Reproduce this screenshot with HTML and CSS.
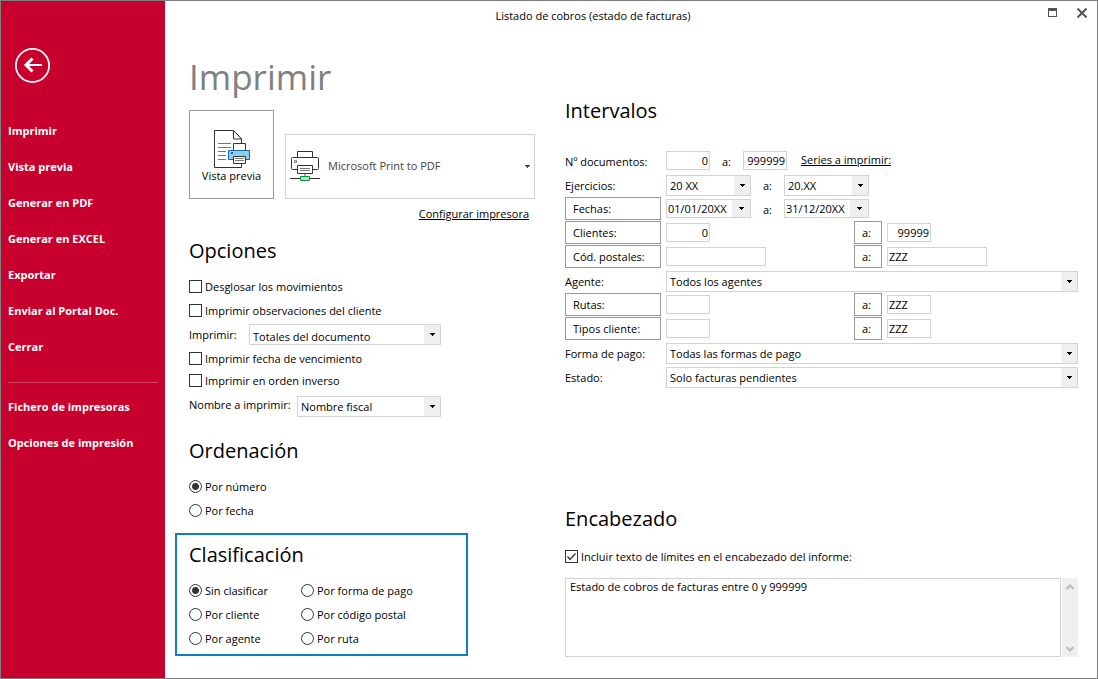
FILE: index.html
```html
<!DOCTYPE html>
<html lang="es">
<head>
<meta charset="utf-8">
<meta name="viewport" content="width=device-width, initial-scale=1">
<title>Listado de cobros (estado de facturas)</title>
<link rel="stylesheet" href="styles.css">
</head>
<body>
<div class="window">
  <aside class="sidebar">
    <button class="back" type="button" aria-label="Volver">
      <svg width="35" height="35" viewBox="0 0 35 35" fill="none" stroke="#fff"><circle cx="17.500" cy="17.500" r="16.600" stroke-width="1.800"/><path d="M10 17h17" stroke-width="2"/><path d="M17.500 10.500l-6.500 6.500 6.500 6.500" stroke-width="3"/></svg>
    </button>
    <nav class="nav">
      <a href="#">Imprimir</a>
      <a href="#">Vista previa</a>
      <a href="#">Generar en PDF</a>
      <a href="#">Generar en EXCEL</a>
      <a href="#">Exportar</a>
      <a href="#">Enviar al Portal Doc.</a>
      <a href="#">Cerrar</a>
      <hr class="nav-line">
      <a href="#">Fichero de impresoras</a>
      <a href="#">Opciones de impresión</a>
    </nav>
  </aside>
  <div class="main">
    <header class="titlebar">
      <div class="title">Listado de cobros (estado de facturas)</div>
      <div class="controls">
        <button type="button" aria-label="Maximizar"><svg width="9" height="9" viewBox="0 0 9 9"><path fill="#555" fill-rule="evenodd" d="M0 0h9v9H0zM1 3v5h7V3z"/></svg></button>
        <button type="button" aria-label="Cerrar ventana"><svg width="10" height="10" viewBox="0 0 10 10" stroke="#555" stroke-width="2"><path d="M.5.5l9 9M9.500.5l-9 9"/></svg></button>
      </div>
    </header>
    <main class="content">
      <div class="left">
        <h1>Imprimir</h1>
        <div class="print-row">
          <button class="preview" type="button">
            <svg width="38" height="38" viewBox="0 0 38 38" fill="#fff" stroke="#333">
              <path d="M1.500.5h19l8 8.500v28.500h-27z"/><path d="M20.500.5v8.500h8z"/>
              <path d="M5 13.500h13M5 17.500h13M5 21.500h8M5 25.500h8M5 29.500h8" stroke="#777"/>
              <path d="M20.500 13.500h12v8h-12z"/>
              <path d="M15.500 20.500h21v9h-21z" fill="#92cbee" stroke="#1668b0"/>
              <path d="M18 22h2v2h-2z" fill="#1668b0" stroke="none"/>
              <path d="M20.500 26.500h12v7h-12z"/><path d="M22 28.500h9M22 30.500h9" stroke="#777"/>
            </svg>
            <span>Vista previa</span>
          </button>
          <div class="printer">
            <svg width="30" height="31" viewBox="0 0 30 31" fill="#fff" stroke="#333">
              <path d="M7.500 7V.5h15V7"/><rect x="1.500" y="6.500" width="27" height="12" rx="1"/>
              <path d="M4.500 9.500h2v2h-2z" stroke="#777"/>
              <path d="M7.500 14.500h15v8h-15z"/><path d="M10 17.500h10M10 19.500h10" stroke="#777"/>
              <path d="M15 23v3" stroke="#aaa" stroke-width="2"/><path d="M0 27.500h30"/>
              <path d="M10.500 25.500h9v4h-9z" fill="#b5e3ba" stroke="#089447"/>
            </svg>
            <select aria-label="Impresora"><option>Microsoft Print to PDF</option></select>
          </div>
        </div>
        <a class="link configure" href="#">Configurar impresora</a>

        <section class="options">
          <h2>Opciones</h2>
          <label class="check"><input type="checkbox">Desglosar los movimientos</label>
          <label class="check"><input type="checkbox">Imprimir observaciones del cliente</label>
          <div class="field"><label for="what">Imprimir:</label><select id="what" class="combo combo-wide"><option>Totales del documento</option></select></div>
          <label class="check"><input type="checkbox">Imprimir fecha de vencimiento</label>
          <label class="check check-tight"><input type="checkbox">Imprimir en orden inverso</label>
          <div class="field field-last"><label for="name">Nombre a imprimir:</label><select id="name" class="combo combo-medium"><option>Nombre fiscal</option></select></div>
        </section>

        <section class="ordering">
          <h2>Ordenación</h2>
          <label class="check"><input type="radio" name="order" checked>Por número</label>
          <label class="check"><input type="radio" name="order">Por fecha</label>
        </section>

        <section class="classify">
          <h2>Clasificación</h2>
          <div class="radio-grid">
            <label class="check"><input type="radio" name="class" checked>Sin clasificar</label>
            <label class="check"><input type="radio" name="class">Por forma de pago</label>
            <label class="check"><input type="radio" name="class">Por cliente</label>
            <label class="check"><input type="radio" name="class">Por código postal</label>
            <label class="check"><input type="radio" name="class">Por agente</label>
            <label class="check"><input type="radio" name="class">Por ruta</label>
          </div>
        </section>
      </div>

      <div class="right">
        <section class="ranges">
          <h2>Intervalos</h2>
          <div class="row">
            <label for="doc1">Nº documentos:</label>
            <div class="pair">
              <input id="doc1" class="box short num" value="0">
              <label class="to" for="doc2">a:</label>
              <input id="doc2" class="box short num" value="999999">
              <a class="link series" href="#">Series a imprimir:</a>
            </div>
          </div>
          <div class="row">
            <label for="year1">Ejercicios:</label>
            <div class="pair">
              <select id="year1" class="combo period"><option>20 XX</option></select>
              <label class="to" for="year2">a:</label>
              <select id="year2" class="combo period"><option>20.XX</option></select>
            </div>
          </div>
          <div class="row">
            <button class="btn" type="button">Fechas:</button>
            <div class="pair">
              <select class="combo period date" aria-label="Fecha inicial"><option>01/01/20XX</option></select>
              <label class="to" for="date2">a:</label>
              <select id="date2" class="combo period date"><option>31/12/20XX</option></select>
            </div>
          </div>
          <div class="row limits">
            <button class="btn" type="button">Clientes:</button>
            <input class="box short num" aria-label="Cliente inicial" value="0">
            <button class="btn" type="button">a:</button>
            <input class="box short num" aria-label="Cliente final" value="99999">
          </div>
          <div class="row limits">
            <button class="btn" type="button">Cód. postales:</button>
            <input class="box long" aria-label="Código postal inicial">
            <button class="btn" type="button">a:</button>
            <input class="box long" aria-label="Código postal final" value="ZZZ">
          </div>
          <div class="row"><label for="agent">Agente:</label><select id="agent" class="combo"><option>Todos los agentes</option></select></div>
          <div class="row limits">
            <button class="btn" type="button">Rutas:</button>
            <input class="box short" aria-label="Ruta inicial">
            <button class="btn" type="button">a:</button>
            <input class="box short" aria-label="Ruta final" value="ZZZ">
          </div>
          <div class="row limits">
            <button class="btn" type="button">Tipos cliente:</button>
            <input class="box short" aria-label="Tipo de cliente inicial">
            <button class="btn" type="button">a:</button>
            <input class="box short" aria-label="Tipo de cliente final" value="ZZZ">
          </div>
          <div class="row"><label for="pay">Forma de pago:</label><select id="pay" class="combo"><option>Todas las formas de pago</option></select></div>
          <div class="row"><label for="state">Estado:</label><select id="state" class="combo"><option>Solo facturas pendientes</option></select></div>
        </section>

        <section class="heading">
          <h2>Encabezado</h2>
          <label class="check"><input type="checkbox" checked>Incluir texto de límites en el encabezado del informe:</label>
          <div class="memo">
            <textarea aria-label="Texto del encabezado">Estado de cobros de facturas entre 0 y 999999</textarea>
            <div class="scroll">
              <button type="button" aria-label="Subir"><svg width="8" height="6" viewBox="0 0 8 6" fill="none" stroke="#bbb" stroke-width="2"><path d="M.5 5L4 1.500 7.500 5"/></svg></button>
              <button type="button" aria-label="Bajar"><svg width="8" height="6" viewBox="0 0 8 6" fill="none" stroke="#bbb" stroke-width="2"><path d="M.5 1L4 4.500 7.500 1"/></svg></button>
            </div>
          </div>
        </section>
      </div>
    </main>
  </div>
</div>
</body>
</html>
```
FILE: styles.css
```css
* { box-sizing: border-box; }

body {
  margin: 0;
  background: #fff;
  color: #000;
  font: 11px/16px "Open Sans", "Noto Sans", sans-serif;
}

button, input, select, textarea {
  margin: 0;
  font: inherit;
  color: inherit;
  border-radius: 0;
}

button { padding: 0; border: 0; background: none; }
a { color: inherit; }
svg { display: block; }

.window {
  display: flex;
  min-height: 100vh;
  border: 1px solid #7f7f7f;
}

.sidebar {
  flex: 0 0 164px;
  padding: 47px 7px 0;
  background: #c8002d;
  color: #fff;
}

.back { display: block; margin: 0 0 30px 7px; }
.nav { display: flex; flex-direction: column; }

.nav a {
  font-weight: 700;
  line-height: 36px;
  text-decoration: none;
  white-space: nowrap;
}

.nav-line {
  width: 100%;
  height: 1px;
  margin: 17px 0 6px;
  border: 0;
  background: #d34061;
}

.main { flex: 1; min-width: 0; display: flex; flex-direction: column; }
.titlebar { display: flex; height: 30px; }
.title { flex: 1; line-height: 30px; text-align: center; }

.controls {
  flex: 0 0 76px;
  display: flex;
  justify-content: flex-end;
  align-items: flex-start;
  gap: 20px;
  padding: 7px 10px 0 0;
}

.content {
  flex: 1;
  display: grid;
  grid-template-columns: 346px minmax(0, 1fr);
  gap: 30px;
  padding: 0 19px 21px 24px;
}

h1, h2 { margin: 0; font-weight: 400; }
h1 { margin: 22px 0 9px; font-size: 35px; line-height: 48px; color: #808080; }
h2 { font-size: 20px; line-height: 32px; margin-bottom: 8px; }

.print-row { display: flex; align-items: flex-end; gap: 11px; }

.preview {
  flex: 0 0 85px;
  height: 89px;
  display: flex;
  flex-direction: column;
  align-items: center;
  padding-top: 19px;
  border: 1px solid #999;
}

.printer {
  flex: 1;
  height: 65px;
  display: flex;
  align-items: center;
  padding-left: 4px;
  border: 1px solid #d3d3d3;
}

.printer select {
  flex: 1;
  height: 63px;
  padding: 0 20px 2px 8px;
  border: 0;
  appearance: none;
  color: #444;
  background: url("data:image/svg+xml,%3Csvg xmlns='http://www.w3.org/2000/svg' width='5' height='3'%3E%3Cpath fill='%23444' d='M0 0h5v1H4v1H3v1H2V2H1V1H0z'/%3E%3C/svg%3E") no-repeat right 4px center;
}

.link { display: block; text-decoration: underline; }
.configure { width: fit-content; margin: 7px 6px 13px auto; }

.check { display: flex; align-items: flex-start; gap: 3px; height: 24px; line-height: 24px; white-space: nowrap; }
.check-tight { height: 20px; line-height: 20px; }

.check input {
  flex: none;
  width: 13px;
  height: 13px;
  margin-top: 5px;
  appearance: none;
  border: 1px solid #333;
  background: #fff;
}

.check-tight input { margin-top: 3px; }
.check input[type="radio"] { border-radius: 50%; }
.check input[type="radio"]:checked { background: radial-gradient(circle, #333 0 3px, #fff 4px); }
.check input[type="checkbox"]:checked {
  background: url("data:image/svg+xml,%3Csvg xmlns='http://www.w3.org/2000/svg' width='11' height='11'%3E%3Cpath fill='none' stroke='%23333' stroke-width='1.3' d='M1.500 5.500l2.500 3L9.500 2.500'/%3E%3C/svg%3E") center;
}

.field { display: flex; justify-content: space-between; height: 24px; width: 252px; line-height: 24px; }
.field-last { margin-top: 4px; line-height: 20px; }
.field .combo { margin-top: 1px; }

.combo {
  height: 21px;
  min-width: 0;
  padding: 0 18px 0 3px;
  border: 1px solid #d3d3d3;
  appearance: none;
  background:
    url("data:image/svg+xml,%3Csvg xmlns='http://www.w3.org/2000/svg' width='5' height='3'%3E%3Cpath d='M0 0h5v1H4v1H3v1H2V2H1V1H0z'/%3E%3C/svg%3E") no-repeat right 5px center,
    linear-gradient(#efefef, #efefef) no-repeat right / 16px 100%,
    #fff;
}

.combo-wide { width: 192px; }
.combo-medium { width: 144px; }

.ordering { margin: 16px 0 10px; }

.classify {
  width: 293px;
  margin-left: -14px;
  padding: 4px 12px 3px;
  border: 2px solid #0a7fc2;
}

.radio-grid { display: grid; grid-template-columns: 112px 1fr; }

.right { display: flex; flex-direction: column; justify-content: space-between; }
.ranges h2 { margin: 64px 0 22px; }
.heading h2 { margin-bottom: 10px; }

.row {
  display: grid;
  grid-template-columns: 96px minmax(0, 1fr);
  column-gap: 5px;
  align-items: start;
  height: 24px;
}

.limits { grid-template-columns: 96px 183px 28px minmax(0, 1fr); }
.row label { line-height: 26px; }
.pair { display: flex; align-items: flex-start; }
.to { padding: 0 12px; min-width: 33px; }
.row .combo, .row .box { margin-top: 2px; }

.box { height: 19px; padding: 0 1px 1px; border: 1px solid #d3d3d3; background: #fff; }
.short { width: 44px; }
.long { width: 100px; }
.num { text-align: right; }
.period { width: 85px; }

.date {
  height: 19px;
  padding-left: 1px;
  padding-right: 16px;
  background-position: right 6px center, right;
  background-size: auto, 18px 100%;
}

.series { margin-left: 14px; line-height: 22px; }

.btn { height: 23px; padding: 0 7px; border: 1px solid #999; text-align: left; }

.memo { display: flex; gap: 1px; height: 79px; margin-top: 9px; }

.memo textarea {
  flex: 1;
  padding: 0 4px;
  border: 1px solid #d3d3d3;
  resize: none;
  outline: 0;
  overflow: hidden;
}

.scroll {
  flex: 0 0 16px;
  display: flex;
  flex-direction: column;
  justify-content: space-between;
  align-items: center;
  padding: 6px 0 5px;
  background: #efefef;
}
```
